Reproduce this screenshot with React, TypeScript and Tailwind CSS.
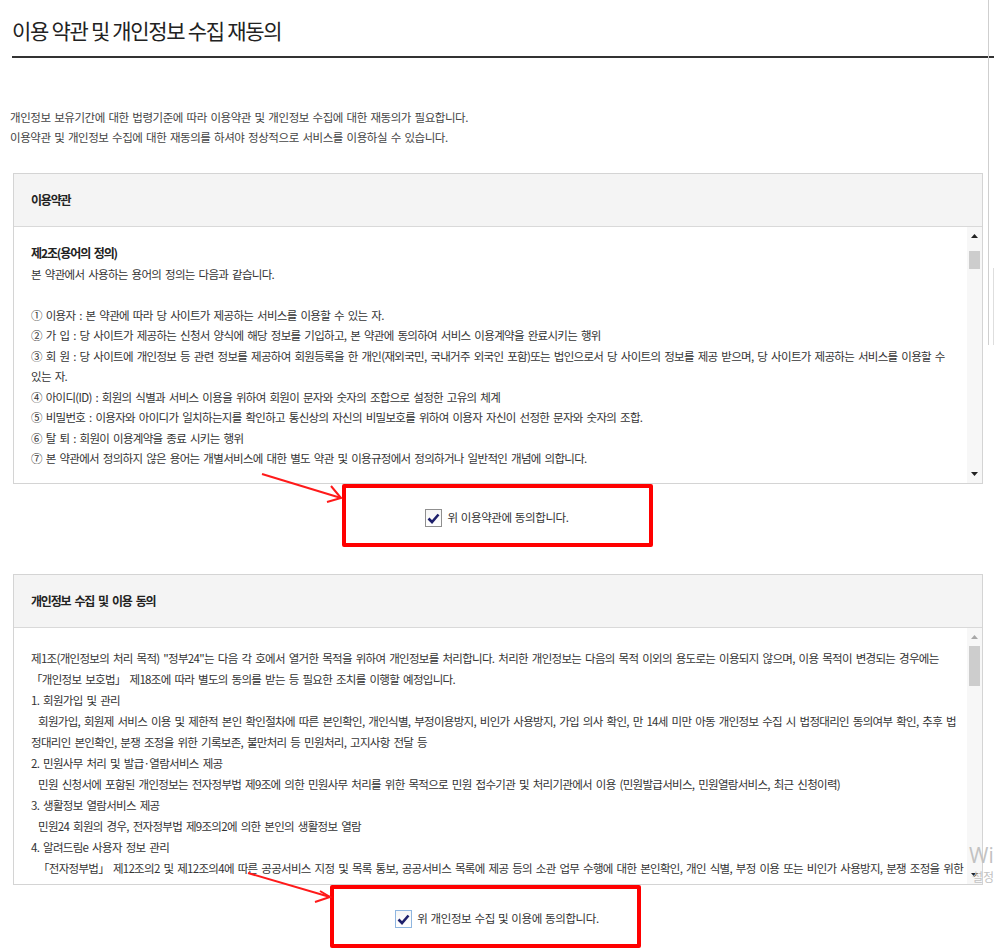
import { ReactNode } from 'react';

const terms = [
  '① 이용자 : 본 약관에 따라 당 사이트가 제공하는 서비스를 이용할 수 있는 자.',
  '② 가 입 : 당 사이트가 제공하는 신청서 양식에 해당 정보를 기입하고, 본 약관에 동의하여 서비스 이용계약을 완료시키는 행위',
  '③ 회 원 : 당 사이트에 개인정보 등 관련 정보를 제공하여 회원등록을 한 개인(재외국민, 국내거주 외국인 포함)또는 법인으로서 당 사이트의 정보를 제공 받으며, 당 사이트가 제공하는 서비스를 이용할 수',
  '있는 자.',
  '④ 아이디(ID) : 회원의 식별과 서비스 이용을 위하여 회원이 문자와 숫자의 조합으로 설정한 고유의 체계',
  '⑤ 비밀번호 : 이용자와 아이디가 일치하는지를 확인하고 통신상의 자신의 비밀보호를 위하여 이용자 자신이 선정한 문자와 숫자의 조합.',
  '⑥ 탈 퇴 : 회원이 이용계약을 종료 시키는 행위',
  '⑦ 본 약관에서 정의하지 않은 용어는 개별서비스에 대한 별도 약관 및 이용규정에서 정의하거나 일반적인 개념에 의합니다.',
];

// [text, indented]
const privacy: [string, boolean][] = [
  ['제1조(개인정보의 처리 목적) "정부24"는 다음 각 호에서 열거한 목적을 위하여 개인정보를 처리합니다. 처리한 개인정보는 다음의 목적 이외의 용도로는 이용되지 않으며, 이용 목적이 변경되는 경우에는', false],
  ['「개인정보 보호법」 제18조에 따라 별도의 동의를 받는 등 필요한 조치를 이행할 예정입니다.', false],
  ['1. 회원가입 및 관리', false],
  ['회원가입, 회원제 서비스 이용 및 제한적 본인 확인절차에 따른 본인확인, 개인식별, 부정이용방지, 비인가 사용방지, 가입 의사 확인, 만 14세 미만 아동 개인정보 수집 시 법정대리인 동의여부 확인, 추후 법', true],
  ['정대리인 본인확인, 분쟁 조정을 위한 기록보존, 불만처리 등 민원처리, 고지사항 전달 등', false],
  ['2. 민원사무 처리 및 발급·열람서비스 제공', false],
  ['민원 신청서에 포함된 개인정보는 전자정부법 제9조에 의한 민원사무 처리를 위한 목적으로 민원 접수기관 및 처리기관에서 이용 (민원발급서비스, 민원열람서비스, 최근 신청이력)', true],
  ['3. 생활정보 열람서비스 제공', false],
  ['민원24 회원의 경우, 전자정부법 제9조의2에 의한 본인의 생활정보 열람', true],
  ['4. 알려드림e 사용자 정보 관리', false],
  ['「전자정부법」 제12조의2 및 제12조의4에 따른 공공서비스 지정 및 목록 통보, 공공서비스 목록에 제공 등의 소관 업무 수행에 대한 본인확인, 개인 식별, 부정 이용 또는 비인가 사용방지, 분쟁 조정을 위한', true],
  ['기록보존, 불만처리 등 민원처리, 고지사항 전달 등', false],
];

const ScrollBar = ({ thumbTop, thumbHeight, upDim }: { thumbTop: string; thumbHeight: string; upDim?: boolean }) => (
  <div className="relative w-[15px] shrink-0 bg-[#f7f7f7]">
    <div className="flex h-[18px] items-center justify-center">
      <svg width="7" height="4" viewBox="0 0 7 4">
        <path d="M0 4 L3.5 0 L7 4 Z" fill={upDim ? '#a8a8a8' : '#222'} />
      </svg>
    </div>
    <div className={`absolute left-[2px] w-[11px] bg-[#cdcdcd] ${thumbTop} ${thumbHeight}`} />
    <div className="absolute bottom-[4px] left-0 flex h-[10px] w-[15px] items-center justify-center">
      <svg width="7" height="4" viewBox="0 0 7 4">
        <path d="M0 0 L3.5 4 L7 0 Z" fill="#222" />
      </svg>
    </div>
  </div>
);

const Panel = ({ title, children, scroll }: { title: string; children: ReactNode; scroll: ReactNode }) => (
  <div className="ml-[13px] w-[970px] border border-[#d4d4d4]">
    <div className="flex h-[53px] items-center border-b border-[#d9d9d9] bg-[#f4f4f4] pl-[17px] text-[12px] font-bold tracking-[-1.2px] text-[#222] [word-spacing:2.5px]">
      {title}
    </div>
    <div className="flex h-[256px]">
      <div className="flex-1 overflow-hidden">{children}</div>
      {scroll}
    </div>
  </div>
);

const CheckBox = ({ focused }: { focused?: boolean }) => (
  <div
    className={`flex h-[18px] w-[17px] items-center justify-center border bg-gradient-to-b from-[#f6f6f6] to-white ${
      focused ? 'border-[#8fb6e0]' : 'border-[#8f8f8f]'
    }`}
  >
    <svg width="13" height="11" viewBox="0 0 13 11">
      <path d="M1.5 5.5 L5 9 L11.5 1.5" fill="none" stroke="#1d1f6b" strokeWidth="2.6" />
    </svg>
  </div>
);

const Agree = ({ label, focused }: { label: string; focused?: boolean }) => (
  <div className="flex h-[90px] items-start justify-center pt-[25px]">
    <label className="flex items-center gap-[5px] text-[11.5px] tracking-[-0.4px] text-[#333] [word-spacing:1px]">
      <CheckBox focused={focused} />
      {label}
    </label>
  </div>
);

const App = () => {
  return (
    <div className="relative h-[949px] w-[994px] overflow-hidden bg-white font-['Noto_Sans_CJK_KR',sans-serif] text-[#333]">
      <div className="pl-[12px]">
        <h1 className="border-b-2 border-[#333] pb-[12px] pt-[16px] text-[21px] leading-[28px] tracking-[-1.3px] text-[#222]">
          이용 약관 및 개인정보 수집 재동의
        </h1>
      </div>

      <div className="mt-[49px] pl-[10px] text-[11.5px] leading-[20px] tracking-[-0.45px] text-[#444] [word-spacing:1.5px]">
        <p>개인정보 보유기간에 대한 법령기준에 따라 이용약관 및 개인정보 수집에 대한 재동의가 필요합니다.</p>
        <p>이용약관 및 개인정보 수집에 대한 재동의를 하셔야 정상적으로 서비스를 이용하실 수 있습니다.</p>
      </div>

      <div className="mt-[26px]">
        <Panel title="이용약관" scroll={<ScrollBar thumbTop="top-[24px]" thumbHeight="h-[18px]" />}>
          <div className="whitespace-nowrap pl-[17px] pt-[16px] text-[11.5px] leading-[20.5px] tracking-[-0.7px] [word-spacing:2px]">
            <p className="text-[12px] font-bold tracking-[-1.1px] text-[#222]">제2조(용어의 정의)</p>
            <p>본 약관에서 사용하는 용어의 정의는 다음과 같습니다.</p>
            <p>&nbsp;</p>
            {terms.map((t) => (
              <p key={t}>{t}</p>
            ))}
          </div>
        </Panel>

        <Agree label="위 이용약관에 동의합니다." />

        <Panel title="개인정보 수집 및 이용 동의" scroll={<ScrollBar thumbTop="top-[18px]" thumbHeight="h-[40px]" upDim />}>
          <div className="whitespace-nowrap pl-[17px] pt-[20px] text-[11.5px] leading-[21px] tracking-[-0.7px] [word-spacing:2px]">
            {privacy.map(([t, indent]) => (
              <p key={t} className={indent ? 'pl-[7px]' : ''}>
                {t}
              </p>
            ))}
          </div>
        </Panel>

        <Agree label="위 개인정보 수집 및 이용에 동의합니다." focused />
      </div>

      {/* page edge bits */}
      <div className="absolute left-[988px] top-0 h-[345px] w-px bg-[#cfcfcf]" />
      <div className="absolute left-[993px] top-[268px] h-[77px] w-px bg-[#dedede]" />

      {/* annotations */}
      <div className="absolute left-[342px] top-[484px] h-[63px] w-[311px] rounded-[2px] border-4 border-[#ff0000]" />
      <div className="absolute left-[330px] top-[885px] h-[63px] w-[311px] rounded-[2px] border-4 border-[#ff0000]" />
      <svg className="pointer-events-none absolute left-0 top-0" width="994" height="949">
        <g stroke="#ff1a1a" strokeWidth="2" fill="none">
          <path d="M262 474 L341 498" />
          <path d="M331 486 L341 498 L327 502" />
          <path d="M248 873 L330 897" />
          <path d="M320 891 L330 897 L315 902" />
        </g>
      </svg>

      {/* windows watermark */}
      <div className="pointer-events-none absolute left-[969px] top-[842px] whitespace-nowrap font-['Open_Sans',sans-serif] text-[#c2c2c2]">
        <p className="text-[21px] leading-[26px]">Windows 정품 인증</p>
        <p className="pl-[3px] font-['Noto_Sans_CJK_KR',sans-serif] text-[12px] leading-[18px]">설정으로 이동하여 Windows를 정품 인증합니다.</p>
      </div>
    </div>
  );
};

export default App;
